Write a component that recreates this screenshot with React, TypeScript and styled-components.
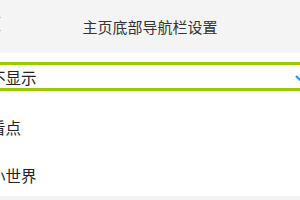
import styled, { createGlobalStyle } from 'styled-components';

const GlobalStyle = createGlobalStyle`
  html, body {
    margin: 0;
    padding: 0;
    background: #ffffff;
    overflow: hidden;
    font-family: "Noto Sans CJK SC", "Noto Sans", sans-serif;
  }
`;

const options = ['不显示', '看点', '小世界'];

export default function App() {
  const selected = 0;

  return (
    <>
      <GlobalStyle />
      <Page>
        <Header>
          <Back>
            <svg width='12' height='16' viewBox='0 0 12 16'>
              <path d='M11 1 L3 8 L11 15' fill='none' stroke='#333' strokeWidth='1.6' />
            </svg>
          </Back>
          <Title>主页底部导航栏设置</Title>
        </Header>
        <List>
          {options.map((item, i) => (
            <Row key={item}>
              <Option active={i === selected}>
                {item}
                {i === selected && (
                  <Check>
                    <svg width='14' height='10' viewBox='0 0 14 10'>
                      <path d='M1 4 L5 8 L13 1' fill='none' stroke='#1e90ff' strokeWidth='2' />
                    </svg>
                  </Check>
                )}
              </Option>
            </Row>
          ))}
        </List>
        <Footer />
      </Page>
    </>
  );
}

const Page = styled.div`
  width: 320px;
  margin-left: -10px;
`;

const Header = styled.div`
  height: 53px;
  background: #f4f4f4;
  display: flex;
  align-items: center;
  justify-content: center;
  position: relative;
`;

const Back = styled.div`
  position: absolute;
  left: -1px;
  top: 16px;
  display: flex;
`;

const Title = styled.div`
  font-size: 15px;
  color: #333;
`;

const List = styled.div`
  display: flex;
  flex-direction: column;
`;

const Row = styled.div`
  box-sizing: border-box;
  height: 48px;
  display: flex;
  align-items: center;

  &:first-child {
    height: 50px;
    align-items: flex-start;
    padding-top: 9px;
  }

  &:last-child {
    height: 45px;
    padding-top: 3px;
  }
`;

const Option = styled.div<{ active: boolean }>`
  flex: 1;
  height: 23px;
  display: flex;
  align-items: center;
  justify-content: space-between;
  padding-left: 0;
  padding-right: 4px;
  font-size: 15.5px;
  color: #222;
  border-top: 3px solid ${({ active }) => (active ? '#99cc00' : 'transparent')};
  border-bottom: 3px solid ${({ active }) => (active ? '#99cc00' : 'transparent')};
`;

const Check = styled.span`
  display: flex;
  margin-right: -3px;
`;

const Footer = styled.div`
  height: 20px;
  background: #f4f4f4;
`;
